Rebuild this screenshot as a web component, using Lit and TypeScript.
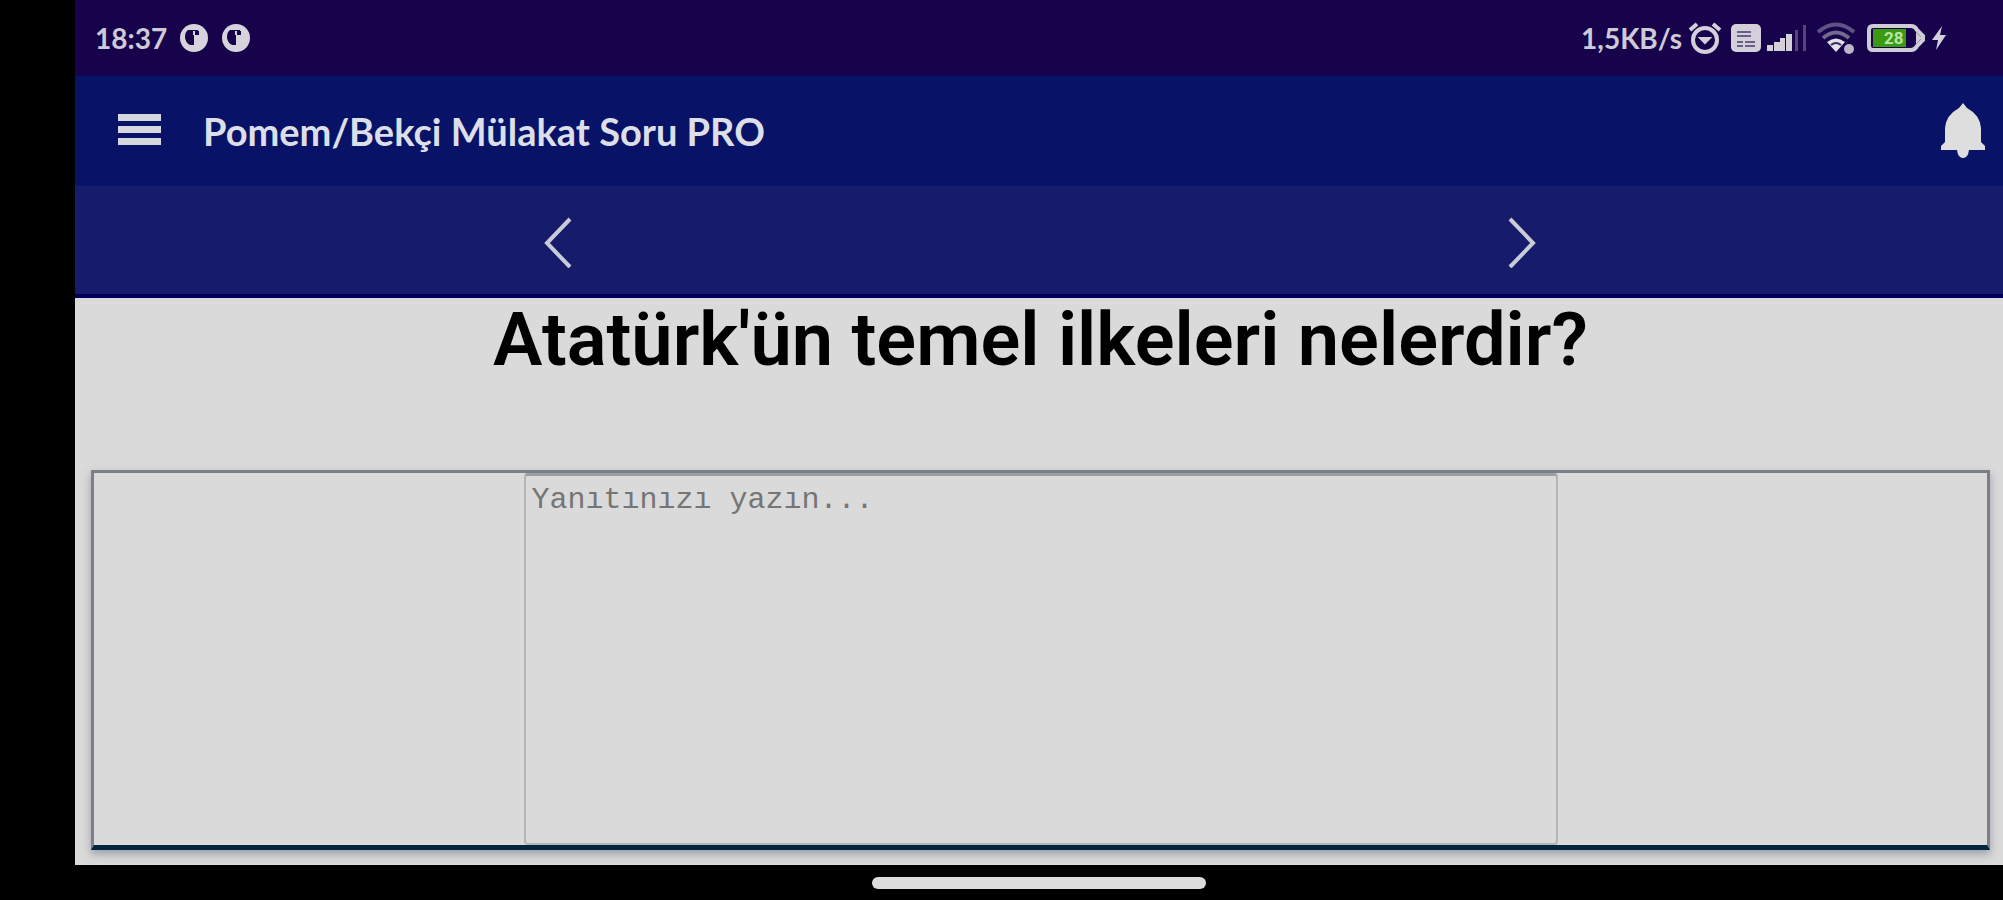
import { LitElement, html, css, svg } from "lit";
import { customElement, state } from "lit/decorators.js";

@customElement("status-bar")
class StatusBar extends LitElement {
  static styles = css`
    :host {
      display: flex;
      justify-content: space-between;
      align-items: center;
      box-sizing: border-box;
      height: 76px;
      padding: 0 56px 0 20px;
      background: #17034b;
      color: #cfcbd6;
      font: 700 28px/40px "Lato", sans-serif;
    }
    .side {
      display: flex;
      align-items: center;
    }
    .notices {
      gap: 12px;
    }
    .icons {
      gap: 6px;
    }
    svg {
      display: block;
    }
    .level {
      font: 700 17px "Roboto", sans-serif;
      fill: #b9e6a4;
    }
  `;

  private notice() {
    return html`<svg width="30" height="30" viewBox="0 0 30 30" aria-hidden="true">
      <circle cx="15" cy="15" r="14" fill="#d6d3dc" />
      <path d="M9 7h10v5h-4v10h-4q-5-3-5-8t3-7z" fill="#17034b" />
      <path d="M16 8h4v4h-4z" fill="#17034b" />
      <path d="M14 8h2v4h-2z" fill="#d6d3dc" />
    </svg>`;
  }

  render() {
    return html`
      <div class="side notices">
        <span>18:37</span>
        ${this.notice()}${this.notice()}
      </div>
      <div class="side icons">
        <span>1,5KB/s</span>
        <svg width="37" height="34" viewBox="0 0 37 34" fill="none" stroke="#d3d0da" aria-hidden="true">
          <circle cx="17" cy="19" r="12" stroke-width="4" />
          <path d="M2 9l7-6M32 9l-7-6" stroke-width="4" />
          <path d="M12 17h10l-5 5z" fill="#d3d0da" stroke-width="2" />
        </svg>
        <svg width="30" height="28" viewBox="0 0 30 28" aria-hidden="true">
          <rect width="30" height="28" rx="5" fill="#d3d0da" />
          <path d="M6 8h14M6 12h14M6 18h6M14 18h10M6 22h6M14 22h10" stroke="#6a5f88" stroke-width="2" />
        </svg>
        <svg width="42" height="28" viewBox="0 0 42 28" aria-hidden="true">
          <path d="M0 21h6v6H0zM7 18h6v9H7zM13 14h5v13h-5zM19 10h6v17h-6z" fill="#d3d0da" />
          <path d="M28 6h3v21h-3zM36 1h3v26h-3z" fill="#554579" />
        </svg>
        <svg width="44" height="32" viewBox="0 0 44 32" fill="none" aria-hidden="true">
          <path d="M3 10Q21-5 39 10" stroke="#5f5285" stroke-width="4" />
          <path d="M8 16Q21 5 34 16" stroke="#74688f" stroke-width="4" />
          <path d="M12 20Q21 13 30 20L21 30z" fill="#e3e1e8" />
          <path d="M16 23q5-4 10 0" stroke="#3a2866" stroke-width="2" />
          <circle cx="34" cy="27" r="5" fill="#bdb8c9" />
        </svg>
        <svg width="60" height="28" viewBox="0 0 60 28" aria-hidden="true">
          <path d="M8 2h38q4 0 6 4l6 6v4l-6 6q-2 4-6 4H8q-4 0-4-4V6q0-4 4-4z" fill="#17034b" stroke="#cfccd8" stroke-width="4" />
          <path d="M8 5h33v18H8z" fill="#3c9a12" />
          <path d="M51 8l6 6-6 6z" fill="#cfccd8" />
          <text class="level" x="19" y="20">28</text>
        </svg>
        <svg width="16" height="26" viewBox="0 0 16 26" aria-hidden="true">
          <path d="M11 1L1 15h6L5 25 15 10H9z" fill="#d3d0da" />
        </svg>
      </div>
    `;
  }
}

@customElement("app-root")
class AppRoot extends LitElement {
  static styles = css`
    :host {
      display: flex;
      flex-direction: column;
      box-sizing: border-box;
      min-height: 100vh;
      padding-left: 75px;
      background: #000;
    }
    button {
      display: flex;
      align-items: center;
      justify-content: center;
      padding: 0;
      border: 0;
      background: none;
      cursor: pointer;
    }
    svg {
      display: block;
    }
    .bar {
      display: flex;
      align-items: center;
      height: 110px;
      padding: 0 17px 0 40px;
      background: #081367;
    }
    .title {
      flex: 1;
      margin: 0 0 0 40px;
      color: #dcdfe8;
      font: 700 38px/48px "Lato", sans-serif;
    }
    .pager {
      display: grid;
      grid-template-columns: 1fr 1fr;
      height: 112px;
      background: #161c6b;
      box-shadow: inset 0 -4px #00005c;
    }
    main {
      flex: 1;
      display: flex;
      flex-direction: column;
      padding: 0 13px 15px 16px;
      background: #dadada;
    }
    .question {
      margin: 0 0 88px;
      color: #000;
      font: 600 74px/84px "Roboto", sans-serif;
      text-align: center;
    }
    .answer {
      flex: 1;
      display: flex;
      justify-content: center;
      border: 3px solid #7b7f88;
      border-bottom: 5px solid #02253f;
      box-shadow: 0 4px 8px rgba(40, 50, 80, 0.35);
    }
    textarea {
      box-sizing: border-box;
      width: 1034px;
      max-width: 100%;
      min-height: 280px;
      margin: 0;
      padding: 6px;
      border: 2px solid #b4b6b4;
      border-top: 3px solid #9c9ea4;
      border-radius: 4px;
      background: #dadada;
      color: #222;
      font: 400 30px/36px "Liberation Mono", monospace;
      resize: none;
      outline: none;
    }
    textarea::placeholder {
      color: #757575;
      opacity: 1;
    }
    .gesture {
      display: flex;
      justify-content: center;
      align-items: center;
      height: 35px;
    }
    .pill {
      width: 334px;
      height: 12px;
      border-radius: 6px;
      background: #dcdcdc;
    }
  `;

  @state() private answer = "";

  private chevron(points: string) {
    return html`<svg width="32" height="52" viewBox="0 0 32 52" aria-hidden="true">
      ${svg`<polyline points=${points} fill="none" stroke="#c9ccd8" stroke-width="4" />`}
    </svg>`;
  }

  render() {
    return html`
      <status-bar></status-bar>
      <header class="bar">
        <button aria-label="Menü">
          <svg width="48" height="36" viewBox="0 0 48 36">
            <path d="M3 1h43v7H3zM3 13h43v7H3zM3 25h43v7H3z" fill="#d6d8e0" />
          </svg>
        </button>
        <h1 class="title">Pomem/Bekçi Mülakat Soru PRO</h1>
        <button aria-label="Bildirimler">
          <svg width="46" height="56" viewBox="0 0 46 56">
            <path
              d="M23 0L27 5Q40 12 41 25V39L45 43V47H29Q28 55 23 55T17 47H1V43L5 39V25Q6 12 19 5z"
              fill="#dedede"
            />
          </svg>
        </button>
      </header>
      <nav class="pager">
        <button aria-label="Önceki soru">${this.chevron("29,3 6,27 29,51")}</button>
        <button aria-label="Sonraki soru">${this.chevron("5,3 28,27 5,51")}</button>
      </nav>
      <main>
        <h2 class="question">Atatürk'ün temel ilkeleri nelerdir?</h2>
        <div class="answer">
          <textarea
            aria-label="Yanıt"
            placeholder="Yanıtınızı yazın..."
            .value=${this.answer}
            @input=${(e: Event) => (this.answer = (e.target as HTMLTextAreaElement).value)}
          ></textarea>
        </div>
      </main>
      <div class="gesture"><div class="pill"></div></div>
    `;
  }
}
